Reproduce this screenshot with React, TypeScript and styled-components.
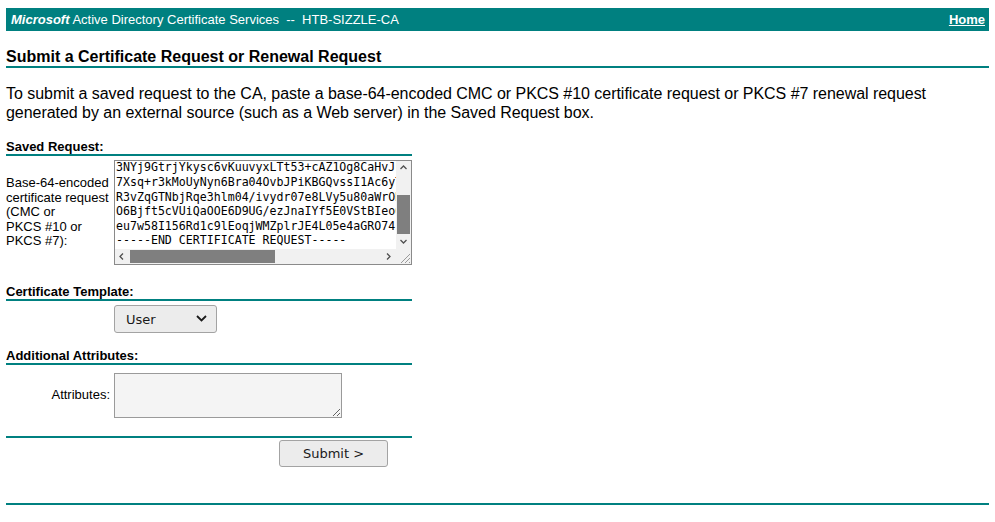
import React, { useLayoutEffect, useRef } from "react";
import styled, { createGlobalStyle } from "styled-components";

const TEAL = "#008080";

const Global = createGlobalStyle`
  html, body { background: #ffffff; }
  body {
    margin: 8px 6px;
    font-family: "Liberation Sans", Arial, sans-serif;
    color: #000;
  }
`;

const Page = styled.div`
  display: flex;
  flex-direction: column;
`;

const TopBar = styled.div`
  height: 23px;
  background: ${TEAL};
  color: #fff;
  font-size: 13px;
  display: flex;
  align-items: center;
  justify-content: space-between;
  padding: 0 4px 0 5px;
  white-space: pre;
`;

const Brand = styled.span`
  font-weight: bold;
  font-style: italic;
`;

const HomeLink = styled.a`
  color: #fff;
  font-weight: bold;
  text-decoration: underline;
`;

const PageTitle = styled.div`
  margin-top: 16px;
  font-size: 16px;
  font-weight: bold;
  line-height: 19px;
  border-bottom: 2px solid ${TEAL};
`;

const Intro = styled.p`
  margin: 16px 0 17px;
  font-size: 16px;
  line-height: 19px;
  letter-spacing: -0.04px;
`;

const Form = styled.div`
  width: 406px;
  display: flex;
  flex-direction: column;
`;

const SectionHead = styled.div<{ $top?: number }>`
  margin-top: ${(p) => p.$top ?? 0}px;
  font-size: 13px;
  font-weight: bold;
  line-height: 15px;
  border-bottom: 2px solid ${TEAL};
`;

const FieldRow = styled.div<{ $top: number }>`
  margin-top: ${(p) => p.$top}px;
  display: grid;
  grid-template-columns: 108px auto;
  align-items: center;
`;

const FieldLabel = styled.div<{ $right?: boolean }>`
  font-size: 13px;
  line-height: 14.4px;
  text-align: ${(p) => (p.$right ? "right" : "left")};
  padding-right: ${(p) => (p.$right ? "4px" : "0")};
`;

/* Saved request box: text area with drawn scroll bars */
const RequestFrame = styled.div`
  box-sizing: border-box;
  width: 298px;
  height: 105px;
  border: 1px solid #8a8a8a;
  background: #fff;
  display: grid;
  grid-template-columns: 1fr 15px;
  grid-template-rows: 1fr 15px;
`;

const RequestText = styled.textarea`
  box-sizing: border-box;
  width: 100%;
  height: 100%;
  margin: 0;
  padding: 1px 2px 1px 1px;
  border: none;
  background: #fff;
  font-family: "DejaVu Sans Mono", monospace;
  font-size: 11.6px;
  line-height: 14.6px;
  white-space: pre;
  overflow: hidden;
  resize: none;
  color: #000;
  outline: none;
`;

const ScrollBar = styled.div<{ $vertical?: boolean }>`
  background: #f1f1f1;
  display: flex;
  flex-direction: ${(p) => (p.$vertical ? "column" : "row")};
`;

const ScrollButton = styled.div`
  flex: 0 0 15px;
  display: flex;
  align-items: center;
  justify-content: center;
`;

const ScrollTrack = styled.div<{ $vertical?: boolean; $end?: boolean }>`
  flex: 1;
  display: flex;
  flex-direction: ${(p) => (p.$vertical ? "column" : "row")};
  justify-content: ${(p) => (p.$end ? "flex-end" : "flex-start")};
  align-items: stretch;
`;

const Thumb = styled.div<{ $vertical?: boolean; $size: number }>`
  background: #7f7f7f;
  ${(p) =>
    p.$vertical
      ? `height: ${p.$size}px; margin: 0 1px;`
      : `width: ${p.$size}px; margin: 1px 0;`}
`;

const Corner = styled.div`
  background: #f1f1f1;
  display: flex;
  align-items: flex-end;
  justify-content: flex-end;
`;

const AttrBox = styled.textarea`
  box-sizing: border-box;
  width: 228px;
  height: 45px;
  margin: 0;
  padding: 2px;
  border: 1px solid #9a9a9a;
  background: #f4f4f4;
  font-family: "DejaVu Sans Mono", monospace;
  font-size: 11.6px;
  resize: both;
  outline: none;
`;

const SelectWrap = styled.div`
  position: relative;
  width: 103px;
  height: 28px;
`;

const Select = styled.select`
  appearance: none;
  -webkit-appearance: none;
  box-sizing: border-box;
  width: 103px;
  height: 28px;
  margin: 0;
  padding: 0 0 0 11px;
  border: 1px solid #a3a3a3;
  border-radius: 3px;
  background: #ececec;
  font-family: "DejaVu Sans", sans-serif;
  font-size: 13px;
  color: #1a1a1a;
  outline: none;
`;

const Chevron = styled.svg`
  position: absolute;
  right: 10px;
  top: 10px;
  pointer-events: none;
`;

const Divider = styled.div<{ $top: number; $full?: boolean }>`
  margin-top: ${(p) => p.$top}px;
  height: 2px;
  background: ${TEAL};
  width: ${(p) => (p.$full ? "100%" : "406px")};
`;

const ButtonRow = styled.div`
  margin-top: 2px;
  display: flex;
  justify-content: flex-end;
  padding-right: 24px;
`;

const SubmitButton = styled.button`
  box-sizing: border-box;
  width: 109px;
  height: 27px;
  margin: 0;
  border: 1px solid #a3a3a3;
  border-radius: 3px;
  background: #ececec;
  font-family: "DejaVu Sans", sans-serif;
  font-size: 13px;
  color: #1a1a1a;
  padding: 0;
`;

const REQUEST = [
  "-----BEGIN CERTIFICATE REQUEST-----",
  "MIICijCCAXICAQAwRTELMAkGA1UEBhMCQVUxEzARBgNVBAgMClNvbWUtU3RhdGUxITAfBgNV",
  "BAoMGEludGVybmV0IFdpZGdpdHMgUHR5IEx0ZDCCASIwDQYJKoZIhvcNAQEBBQADggEPADCC",
  "AQoCggEBAM7kUvQpXw9sYf2hLr0Jb6tN3eGdq1xZcVmP8uHk5aTrW4oYiC7nFgBs2jOlDeKy",
  "3NYj9GtrjYkysc6vKuuvyxLTt53+cAZ1Og8CaHvJk2pWq7RtXbLm9NcVd0yFa3GhUe5sPiQo",
  "7Xsq+r3kMoUyNyn6Bra04OvbJPiKBGQvssI1Ac6yTf8wLhZ2mEpNdR4cXqJ9aYbVu1kGoS3e",
  "R3vZqGTNbjRqe3hlm04/ivydr07e8LVy5u80aWrOHs2pL1mQ9cKfTaBw7xNgYj5dUeIo3Vzn",
  "O6Bjft5cVUiQaOOE6D9UG/ezJnaIYf5E0VStBIeoQw8rLp2sKx1dMhTyNc4gAu7vZ3bFjWiR",
  "eu7w58I156Rd1c9lEoqjWMZplrJE4L05e4aGRO74",
  "-----END CERTIFICATE REQUEST-----",
].join("\n");

const Arrow = ({ dir }: { dir: "up" | "down" | "left" | "right" }) => {
  const paths: Record<string, string> = {
    up: "M1.5 5 L4.5 2 L7.5 5",
    down: "M1.5 3 L4.5 6 L7.5 3",
    left: "M5 1.5 L2 4.5 L5 7.5",
    right: "M3 1.5 L6 4.5 L3 7.5",
  };
  return (
    <svg width="9" height="9" viewBox="0 0 9 9">
      <path d={paths[dir]} fill="none" stroke="#505050" strokeWidth="1.3" />
    </svg>
  );
};

export default function App() {
  const ref = useRef<HTMLTextAreaElement>(null);
  useLayoutEffect(() => {
    const el = ref.current;
    if (el) {
      el.scrollTop = el.scrollHeight;
      el.scrollLeft = 0;
    }
  }, []);

  return (
    <>
      <Global />
      <Page>
        <TopBar>
          <span>
            <Brand>Microsoft</Brand> Active Directory Certificate Services  --  HTB-SIZZLE-CA
          </span>
          <HomeLink href="#">Home</HomeLink>
        </TopBar>

        <PageTitle>Submit a Certificate Request or Renewal Request</PageTitle>

        <Intro>
          To submit a saved request to the CA, paste a base-64-encoded CMC or PKCS #10 certificate request or PKCS #7
          renewal request generated by an external source (such as a Web server) in the Saved Request box.
        </Intro>

        <Form>
          <SectionHead>Saved Request:</SectionHead>
          <FieldRow $top={4}>
            <FieldLabel>
              Base-64-encoded
              <br />
              certificate request
              <br />
              (CMC or
              <br />
              PKCS #10 or
              <br />
              PKCS #7):
            </FieldLabel>
            <RequestFrame>
              <RequestText ref={ref} defaultValue={REQUEST} spellCheck={false} />
              <ScrollBar $vertical>
                <ScrollButton>
                  <Arrow dir="up" />
                </ScrollButton>
                <ScrollTrack $vertical $end>
                  <Thumb $vertical $size={39} />
                </ScrollTrack>
                <ScrollButton>
                  <Arrow dir="down" />
                </ScrollButton>
              </ScrollBar>
              <ScrollBar>
                <ScrollButton>
                  <Arrow dir="left" />
                </ScrollButton>
                <ScrollTrack>
                  <Thumb $size={145} />
                </ScrollTrack>
                <ScrollButton>
                  <Arrow dir="right" />
                </ScrollButton>
              </ScrollBar>
              <Corner>
                <svg width="14" height="14" viewBox="0 0 14 14">
                  <path d="M13 4 L4 13 M13 8 L8 13 M13 12 L12 13" stroke="#9a9a9a" strokeWidth="1" />
                </svg>
              </Corner>
            </RequestFrame>
          </FieldRow>

          <SectionHead $top={19}>Certificate Template:</SectionHead>
          <FieldRow $top={4}>
            <span />
            <SelectWrap>
              <Select defaultValue="User">
                <option>User</option>
              </Select>
              <Chevron width="11" height="7" viewBox="0 0 11 7">
                <path d="M1 1 L5.5 5.5 L10 1" fill="none" stroke="#1a1a1a" strokeWidth="1.8" />
              </Chevron>
            </SelectWrap>
          </FieldRow>

          <SectionHead $top={15}>Additional Attributes:</SectionHead>
          <FieldRow $top={8}>
            <FieldLabel $right>Attributes:</FieldLabel>
            <AttrBox />
          </FieldRow>

          <Divider $top={18} />
          <ButtonRow>
            <SubmitButton>Submit &gt;</SubmitButton>
          </ButtonRow>
        </Form>

        <Divider $top={36} $full />
      </Page>
    </>
  );
}
